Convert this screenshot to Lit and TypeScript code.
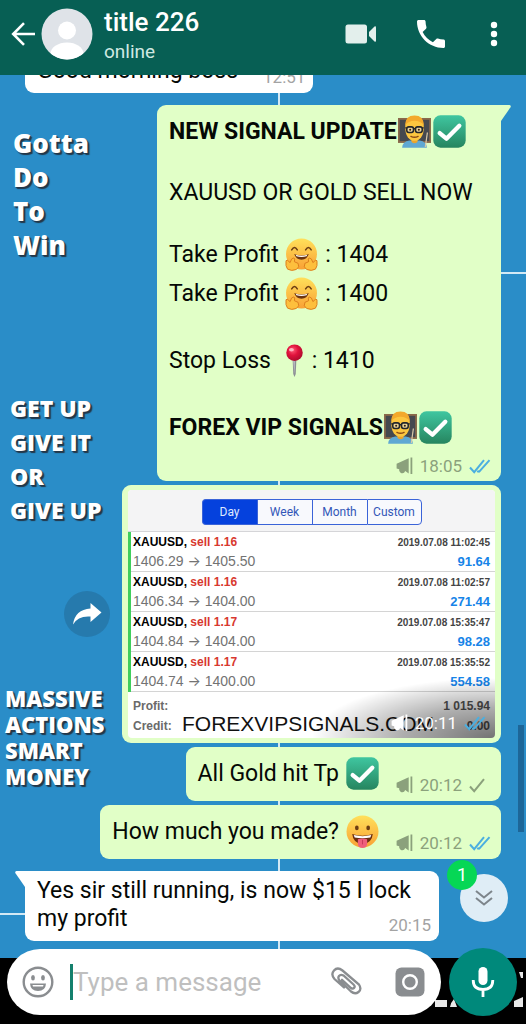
import { LitElement, html, css, svg, nothing } from "lit";
import { customElement, state } from "lit/decorators.js";
import { classMap } from "lit/directives/class-map.js";

type Status = "sent" | "read" | "none";

const gradients = html`<svg class="defs" width="0" height="0" aria-hidden="true">
  <defs>
    <linearGradient id="g-check" x1="0" y1="0" x2="0" y2="1">
      <stop offset="0" stop-color="#3fc6a0" /><stop offset="1" stop-color="#26855f" />
    </linearGradient>
    <linearGradient id="g-face" x1="0" y1="0" x2="0" y2="1">
      <stop offset="0" stop-color="#ffe05a" /><stop offset="1" stop-color="#f9a135" />
    </linearGradient>
    <radialGradient id="g-pin" cx=".4" cy=".35" r=".7">
      <stop offset="0" stop-color="#ff5a76" /><stop offset=".45" stop-color="#e0123c" /><stop offset="1" stop-color="#a90a2c" />
    </radialGradient>
  </defs>
</svg>`;

const emoji = {
  check: html`<svg class="emoji" viewBox="0 0 32 32" role="img" aria-label="check mark">
    <rect x=".3" y=".3" width="31.4" height="31.4" rx="7" fill="url(#g-check)" />
    <path d="M6.5 17.5 L13 23 L25.5 10.5" fill="none" stroke="#fff" stroke-width="4.2" stroke-linecap="round" stroke-linejoin="round" />
  </svg>`,
  hug: html`<svg class="emoji" viewBox="0 0 32 32" role="img" aria-label="hugging face">
    <circle cx="16" cy="15.5" r="15" fill="url(#g-face)" />
    <path d="M6.5 11.5q2.700-4.400 5.400 0M20 11.500q2.700-4.400 5.400 0" fill="none" stroke="#6b3d12" stroke-width="1.500" stroke-linecap="round" />
    <path d="M9 15.500q7 3 14 0q-1.500 5.500-7 5.500t-7-5.500z" fill="#6b3410" />
    <path d="M10.300 16.300q5.700 1.800 11.400 0l-.8 1.500q-4.900 1.200-9.800 0z" fill="#fff" />
    <path d="M1 22q1.500-1.500 2.500.8l1.500 1q1-4.500 3.500-4.500 1.500.4.600 3.700l3.600 1.600q2 3.700-1.700 5.900-4.500 2-8.500-.3Q.200 27.500 1 22z" fill="#fdbf3d" stroke="#d97a1b" stroke-width=".9" />
    <path d="M31 22q-1.500-1.500-2.500.8l-1.500 1q-1-4.500-3.500-4.500-1.500.4-.600 3.700l-3.600 1.600q-2 3.700 1.700 5.900 4.500 2 8.500-.3 2.300-2.700 1.500-8.200z" fill="#fdbf3d" stroke="#d97a1b" stroke-width=".9" />
  </svg>`,
  teacher: html`<svg class="emoji" viewBox="0 0 32 32" role="img" aria-label="teacher">
    <rect x=".8" y="3.800" width="30.400" height="22.400" fill="#45494f" stroke="#8a6a4b" stroke-width="1.800" />
    <path d="M4 31.800q.5-6.300 7-7h10q6.500.7 7 7z" fill="#5fa8d3" />
    <path d="M13 21h6v5q-3 3-6 0z" fill="#e8a42f" />
    <path d="M7 12q0-11 9-11t9 11q0 6-2.500 9.500-2.500 3.500-6.500 3.500t-6.500-3.500Q7 18 7 12z" fill="#fcc63f" />
    <path d="M7 10Q7 .500 16 .500T25 10Q22 5.500 16 5.500T7 10z" fill="#f3a92c" />
    <rect x="8.500" y="11.500" width="6.500" height="5.400" rx="2" fill="#e9d39a" stroke="#22262b" stroke-width="1.500" />
    <rect x="17" y="11.500" width="6.500" height="5.400" rx="2" fill="#e9d39a" stroke="#22262b" stroke-width="1.500" />
    <path d="M15 13.300h2M7 12.500h1.500M23.500 12.500h1.500" stroke="#22262b" stroke-width="1.400" />
    <circle cx="11.800" cy="14.300" r="1" fill="#35220f" /><circle cx="20.200" cy="14.300" r="1" fill="#35220f" />
    <path d="M12.500 20.700q3.500 1.800 7 0" fill="none" stroke="#8c4b16" stroke-width="1.300" stroke-linecap="round" />
    <path d="M26.500 31L28.500 17" stroke="#d8c8a8" stroke-width="1.200" />
  </svg>`,
  pin: html`<svg class="emoji" viewBox="0 0 32 32" role="img" aria-label="pushpin">
    <path d="M14.200 15h3.600l-.6 14-1.200 3-1.200-3z" fill="#8d9096" /><path d="M14.900 15h1.200l-.2 14z" fill="#d5d8dc" />
    <circle cx="16" cy="8.400" r="8" fill="url(#g-pin)" />
    <ellipse cx="13" cy="5.500" rx="2.400" ry="1.700" fill="#ffb3c0" />
  </svg>`,
  tongue: html`<svg class="emoji" viewBox="0 0 32 32" role="img" aria-label="face with tongue">
    <circle cx="16" cy="16" r="15.500" fill="url(#g-face)" />
    <ellipse cx="10.500" cy="12.500" rx="1.800" ry="2.400" fill="#6b3d12" /><ellipse cx="21.500" cy="12.500" rx="1.800" ry="2.400" fill="#6b3d12" />
    <path d="M6 18.500q10 3 20 0Q25 28 16 28T6 18.500z" fill="#6b2f10" />
    <path d="M7.500 19.500q8.500 2.200 17 0l-.9 2.300q-7.600 1.600-15.200 0z" fill="#fff" />
    <path d="M11.500 23.500q4.500-1.500 9 0v4.500q-.5 4-4.500 4t-4.500-4z" fill="#ef5f7c" /><path d="M16 24v4.500" stroke="#c93b5c" stroke-width="1" />
  </svg>`,
};

const megaphone = html`<svg class="horn" viewBox="0 0 17 18" aria-label="broadcast" role="img">
  <path d="M12.700 1.200v15.200l-3.500-2.300Q8 17.200 4.800 16q-2.300-1.200-1.600-3.700L.6 11.600V6.800z" fill="currentColor" />
  <rect x="14.500" y=".5" width="1.800" height="16.500" fill="currentColor" />
</svg>`;

const ticks = (s: Status) => html`<svg class=${classMap({ ticks: true, read: s === "read" })} viewBox="0 0 22 15" role="img" aria-label=${s}>
  <path d="M1 8.500L5.200 13.200L15 1.200" />
  ${s === "read" ? svg`<path d="M9.800 13.200L20.500 1.200M8.400 11.800l1.400 1.400" />` : nothing}
</svg>`;

const meta = (time: string, s: Status) => html`<span class="meta">
  ${s === "none" ? nothing : megaphone}<time>${time}</time>${s === "none" ? nothing : ticks(s)}
</span>`;

const trades = [
  { lot: "1.16", from: "1406.29", to: "1405.50", at: "2019.07.08 11:02:45", gain: "91.64" },
  { lot: "1.16", from: "1406.34", to: "1404.00", at: "2019.07.08 11:02:57", gain: "271.44" },
  { lot: "1.17", from: "1404.84", to: "1404.00", at: "2019.07.08 15:35:47", gain: "98.28" },
  { lot: "1.17", from: "1404.74", to: "1400.00", at: "2019.07.08 15:35:52", gain: "554.58" },
];

@customElement("trade-report")
class TradeReport extends LitElement {
  @state() private range = "Day";

  static styles = css`
    :host { display: block; background: #fff; font-family: "Liberation Sans", Arial, sans-serif; color: #000; height: 248px; border-radius: 4px; overflow: hidden; position: relative; }
    .tabs { display: flex; justify-content: center; background: #f4f4f5; padding: 9px 0 6px; border-bottom: 1px solid #d5d5d8; }
    .tabs button { box-sizing: border-box; width: 55px; height: 26px; padding: 0; border: 1px solid #3a63d8; border-right: 0; background: #f8f9fd; color: #3357b8; font: 12px Roboto, sans-serif; }
    .tabs button:first-child { border-radius: 4px 0 0 4px; }
    .tabs button:last-child { border-right: 1px solid #3a63d8; border-radius: 0 4px 4px 0; }
    .tabs button.on { background: #0541dd; color: #dfe8ff; }
    table { width: 100%; border-collapse: collapse; }
    td { padding: 1px 5px 0 2px; border-bottom: 1px solid #d4d4d4; line-height: 19px; vertical-align: top; }
    td:first-child { border-left: 3px solid #3fce5c; }
    td:last-child { text-align: right; }
    .pair { font-size: 12px; font-weight: 700; }
    .sell { color: #d8382f; }
    .price { font-size: 14px; color: #737373; height: 19px; }
    .arrow { font-family: Inter, sans-serif; line-height: 14px; }
    .at { font-size: 10px; font-weight: 700; color: #444; height: 19px; }
    .gain { font-size: 13px; font-weight: 700; color: #1784e8; }
    dl { display: grid; grid-template-columns: auto 1fr; margin: 0; padding: 4px 5px; font-size: 12px; line-height: 20px; font-weight: 700; color: #6a6a6a; }
    dd { margin: 0; text-align: right; color: #555; }
    .brand { position: absolute; left: 54px; bottom: 2px; font-size: 21px; line-height: 24px; color: #111; }
    .shade { position: absolute; right: 0; bottom: 0; width: 50%; height: 60px; background: radial-gradient(ellipse 100% 100% at 100% 100%, rgba(0,0,0,.55), rgba(0,0,0,.32) 50%, rgba(0,0,0,0)); }
  `;

  render() {
    return html`
      <div class="tabs">
        ${["Day", "Week", "Month", "Custom"].map(
          (r) => html`<button class=${classMap({ on: r === this.range })} @click=${() => (this.range = r)}>${r}</button>`
        )}
      </div>
      <table>
        ${trades.map((t) => html`<tr>
          <td><div class="pair">XAUUSD, <span class="sell">sell ${t.lot}</span></div><div class="price">${t.from} <span class="arrow">→</span> ${t.to}</div></td>
          <td><div class="at">${t.at}</div><div class="gain">${t.gain}</div></td>
        </tr>`)}
      </table>
      <dl><dt>Profit:</dt><dd>1 015.94</dd><dt>Credit:</dt><dd>0.00</dd></dl>
      <div class="brand">FOREXVIPSIGNALS.COM</div>
      <div class="shade"></div>
    `;
  }
}

@customElement("app-root")
class AppRoot extends LitElement {
  static styles = css`
    :host { display: flex; flex-direction: column; height: 100vh; font-family: Roboto, sans-serif; color: #050805; overflow: hidden; }
    * { box-sizing: border-box; }
    button { border: 0; padding: 0; background: none; color: inherit; font: inherit; display: grid; place-items: center; flex: none; }
    .defs { position: absolute; }

    header { flex: none; height: 75px; padding: 0 21px 7px 10px; background: #075f54; color: #fff; display: flex; align-items: center; }
    header svg { display: block; }
    .avatar { margin-left: 5px; width: 52px; height: 52px; }
    .who { flex: 1; margin-left: 11px; padding-top: 4px; display: grid; }
    .who h1 { margin: 0; font-size: 26px; line-height: 32px; font-weight: 500; }
    .who span { font-size: 19px; line-height: 28px; color: #cfe9e2; }
    .actions { display: flex; align-items: center; gap: 40px; }

    .stage { flex: 1; min-height: 0; display: grid; grid-template: minmax(0, 1fr) / minmax(0, 1fr); overflow: hidden; position: relative; }
    .wallpaper, .thread { grid-area: 1 / 1; min-height: 0; }
    .wallpaper {
      background:
        linear-gradient(#d3e9f5, #d3e9f5) 53% 0 / 2px calc(100% - 66px) no-repeat,
        linear-gradient(#d3e9f5, #d3e9f5) 100% 197px / 47% 2px no-repeat,
        linear-gradient(#d3e9f5, #d3e9f5) 0 838px / 53% 2px no-repeat,
        linear-gradient(#000, #000) 0 100% / 100% 66px no-repeat,
        #2a8dc8;
      color: #fff; font-family: "Open Sans", sans-serif; font-weight: 800; padding: 51px 5px 0; text-shadow: 1px 1px 1px #24384a, 2px 2px 1px #24384a;
    }
    .wallpaper p { margin: 0; white-space: pre-line; }
    .gotta { font-size: 26px; line-height: 34px; padding-left: 8px; }
    .getup { font-size: 23px; line-height: 34px; padding: 129px 0 0 5px; }
    .massive { font-size: 22px; line-height: 26px; padding-top: 158px; }

    .thread { display: flex; flex-direction: column; }
    .list { flex: 1; min-height: 0; padding: 0 25px 7px; display: flex; flex-direction: column; justify-content: flex-end; gap: 4px; overflow: hidden; }
    .row { display: flex; align-items: center; justify-content: flex-end; gap: 12px; flex: none; }
    .row.in { justify-content: flex-start; }
    .turn { margin-top: 8px; }
    .bubble { position: relative; background: #e1ffc7; border-radius: 9px; padding: 7px 10px 8px 12px; font-size: 23px; line-height: 28px; display: flex; align-items: flex-end; gap: 16px; }
    .in .bubble { background: #fff; padding: 6px 8px 8px 12px; max-width: 87%; gap: 25px; }
    .bubble.note { display: grid; gap: 0; padding: 7px 10px 7px 12px; width: 344px; max-width: 100%; }
    .bubble.tail { border-top-right-radius: 0; }
    .in .bubble.tail { border-radius: 0 9px 9px 9px; }
    .in .bubble.wrap { display: grid; }
    .bubble.wrap > :not(.tip) { grid-area: 1 / 1; }
    .bubble.wrap .meta { align-self: end; }
    .bubble.photo { display: block; padding: 5px 6px; width: 379px; max-width: 100%; }
    .bubble.photo .meta { position: absolute; right: 15px; bottom: 12px; color: #fff; }
    .tip { position: absolute; top: 0; left: 100%; width: 10px; height: 16px; }
    .in .tip { left: auto; right: 100%; transform: scaleX(-1); }
    .line { min-height: 28px; white-space: pre; }
    .tall { line-height: 39px; height: 39px; white-space: nowrap; }
    .note .meta { margin-top: 9px; }
    b { font-weight: 700; }
    .emoji { width: 33px; height: 33px; vertical-align: middle; margin: -3px 1px 0; }
    .meta { display: flex; align-items: center; justify-content: flex-end; justify-self: end; height: 20px; gap: 7px; font-size: 17px; line-height: 20px; color: #8ba17c; flex: none; margin-bottom: -2px; }
    .in .meta { color: #a3a3a3; }
    .horn { width: 17px; height: 18px; }
    .ticks { width: 22px; height: 15px; fill: none; stroke: #8ba17c; stroke-width: 2; }
    .ticks.read { stroke: #4bafe0; }

    .share { width: 46px; height: 46px; border-radius: 50%; background: #267aad; color: #fff; }
    .scrollbar { position: absolute; right: 2px; top: 650px; width: 6px; height: 107px; background: #1d6698; }
    .jump { position: absolute; right: 18px; bottom: 102px; width: 48px; height: 48px; border-radius: 50%; background: #dfedf6; }
    .count { position: absolute; left: -13px; top: -14px; width: 30px; height: 30px; border-radius: 50%; background: #06d755; color: #fff; font-size: 18px; line-height: 30px; text-align: center; }

    footer { flex: none; display: flex; align-items: center; gap: 8px; padding: 0 9px 8px 7px; position: relative; }
    .mark { position: absolute; right: 0; bottom: 16px; width: 96px; height: 36px; }
    .composer { position: relative; flex: 1; min-width: 0; height: 66px; border-radius: 33px; background: #fff; display: flex; align-items: center; padding: 0 16px 0 15px; }
    .caret { width: 3px; height: 36px; background: #14806d; margin-left: 16px; flex: none; }
    input { flex: 1; min-width: 0; border: 0; padding: 0; outline: 0; background: none; font: 26px/36px Roboto, sans-serif; color: #111; }
    input::placeholder { color: #bfbfbf; opacity: 1; }
    .clip { margin-right: 32px; }
    .mic { position: relative; width: 68px; height: 68px; border-radius: 50%; background: #00897b; }
  `;

  render() {
    const tip = (fill: string) => html`<svg class="tip" viewBox="0 0 10 16" aria-hidden="true"><path d="M0 0H8.500Q10.500.5 9.500 2.200L0 16z" fill=${fill} /></svg>`;
    return html`
      ${gradients}
      <header>
        <button aria-label="Back"><svg width="26" height="26" viewBox="0 0 26 26" fill="none" stroke="#fff" stroke-width="2.600"><path d="M25 13H3.500M14 2.200L3.200 13L14 23.800" /></svg></button>
        <svg class="avatar" viewBox="0 0 52 52" role="img" aria-label="Profile photo">
          <defs><clipPath id="face"><circle cx="26" cy="26" r="25.500" /></clipPath></defs>
          <g clip-path="url(#face)"><rect width="52" height="52" fill="#dfe3e8" /><circle cx="26" cy="22.500" r="9" fill="#fff" /><ellipse cx="26" cy="46" rx="16.500" ry="11.500" fill="#fff" /></g>
        </svg>
        <div class="who"><h1>title 226</h1><span>online</span></div>
        <div class="actions">
          <button aria-label="Video call"><svg width="32" height="20" viewBox="0 0 32 20" fill="#e3efec"><rect x=".5" y=".5" width="21.500" height="19" rx="2.500" /><path d="M24 8L29.500 2.500q1.500-.8 1.500 1v13q0 1.800-1.500 1L24 12z" /></svg></button>
          <button aria-label="Call"><svg width="28" height="28" viewBox="3 3 18 18" fill="#fff"><path d="M6.620 10.790c1.440 2.830 3.760 5.140 6.590 6.590l2.200-2.200c.27-.27.67-.36 1.020-.24 1.120.37 2.330.57 3.570.57.55 0 1 .45 1 1V20c0 .55-.45 1-1 1-9.390 0-17-7.610-17-17 0-.55.45-1 1-1h3.500c.55 0 1 .45 1 1 0 1.250.2 2.450.57 3.570.11.35.03.74-.25 1.020l-2.200 2.200z" /></svg></button>
          <button aria-label="More"><svg width="20" height="26" viewBox="0 0 20 26" fill="#fff"><circle cx="9" cy="4" r="3.200" /><circle cx="9" cy="13" r="3.200" /><circle cx="9" cy="22" r="3.200" /></svg></button>
        </div>
      </header>
      <div class="stage">
        <div class="wallpaper">
          <p class="gotta">Gotta<br />Do<br />To<br />Win</p>
          <p class="getup">GET UP<br />GIVE IT<br />OR<br />GIVE UP</p>
          <p class="massive">MASSIVE<br />ACTIONS<br />SMART<br />MONEY</p>
        </div>
        <div class="thread">
          <div class="list">
            <div class="row in"><div class="bubble"><span>Good morning boss</span>${meta("12:51", "none")}</div></div>
            <div class="row turn">
              <div class="bubble note tail">
                ${tip("#e1ffc7")}
                <div class="tall"><b>NEW SIGNAL UPDATE</b>${emoji.teacher}${emoji.check}</div>
                <div class="line"></div>
                <div class="line">XAUUSD OR GOLD SELL NOW</div>
                <div class="line"></div>
                <div class="tall">Take Profit ${emoji.hug} : 1404</div>
                <div class="tall">Take Profit ${emoji.hug} : 1400</div>
                <div class="line"></div>
                <div class="tall">Stop Loss ${emoji.pin}: 1410</div>
                <div class="line"></div>
                <div class="tall"><b>FOREX VIP SIGNALS</b>${emoji.teacher}${emoji.check}</div>
                ${meta("18:05", "read")}
              </div>
            </div>
            <div class="row">
              <button class="share" aria-label="Forward"><svg width="30" height="24" viewBox="0 0 30 24" fill="#fff"><path d="M18.500 1L29.500 10.500L18.500 20v-5.500Q6 13.500 1 22.500Q3 7.500 18.500 6.500z" /></svg></button>
              <div class="bubble photo"><trade-report></trade-report>${meta("20:11", "read")}</div>
            </div>
            <div class="row"><div class="bubble"><div class="tall">All Gold hit Tp ${emoji.check}</div>${meta("20:12", "sent")}</div></div>
            <div class="row"><div class="bubble"><div class="tall">How much you made? ${emoji.tongue}</div>${meta("20:12", "read")}</div></div>
            <div class="row in turn"><div class="bubble tail wrap">${tip("#fff")}<div>Yes sir still running, is now $15 I lock my profit</div>${meta("20:15", "none")}</div></div>
          </div>
          <footer>
            <svg class="mark" viewBox="0 0 96 36" aria-hidden="true" fill="#e8e8e8"><rect x="5" y="28" width="12" height="7" /><path d="M20 35q1-5 4-8l3 8zM89 0h4v6h-2zM84 29l9-4v10h-9z" /></svg>
            <div class="composer">
              <button aria-label="Emoji"><svg width="32" height="32" viewBox="0 0 32 32"><circle cx="16" cy="16" r="14.300" fill="none" stroke="#8a8d90" stroke-width="2.400" /><ellipse cx="11" cy="11.800" rx="1.900" ry="2.700" fill="#8a8d90" /><ellipse cx="21" cy="11.800" rx="1.900" ry="2.700" fill="#8a8d90" /><path d="M8 17.500h16q-.5 7.500-8 7.500t-8-7.500z" fill="#8a8d90" /><path d="M10.500 19h11l-.5 1.600h-10z" fill="#fff" /></svg></button>
              <span class="caret"></span>
              <input type="text" aria-label="Message" placeholder="Type a message" />
              <button class="clip" aria-label="Attach"><svg width="32" height="30" viewBox="0 0 32 30" fill="none" stroke="#8a8d90" stroke-width="2.300" stroke-linecap="round"><path d="M22.500 17.500L12.500 8.500Q9.500 7 8 9t.500 4.500L20 24.500q4 3.300 7.500.5t.5-7.500L11.500 3.500Q6.500-.5 3 3.500t.5 8.500L13 20.500M11 12.800l9 8.200q2 1.300 3.200-.2t-.7-3.300" /></svg></button>
              <button aria-label="Camera"><svg width="30" height="30" viewBox="0 0 30 30"><rect x=".5" y=".5" width="29" height="29" rx="6" fill="#8a8d90" /><circle cx="15" cy="15" r="6.800" fill="none" stroke="#fff" stroke-width="2.400" /></svg></button>
            </div>
            <button class="mic" aria-label="Record voice message"><svg width="24" height="32" viewBox="0 0 24 32"><rect x="7.500" y="1" width="9" height="18" rx="4.500" fill="#fff" /><path d="M2.200 14q0 9.500 9.800 9.500T21.800 14M12 23.500V31" fill="none" stroke="#fff" stroke-width="2.800" /></svg></button>
          </footer>
        </div>
        <div class="scrollbar"></div>
        <button class="jump" aria-label="Jump to latest"><svg width="20" height="18" viewBox="0 0 20 18" fill="none" stroke="#7d858b" stroke-width="2"><path d="M2 2l8 6.500L18 2M2 9l8 6.500L18 9" /></svg><span class="count">1</span></button>
      </div>
    `;
  }
}
